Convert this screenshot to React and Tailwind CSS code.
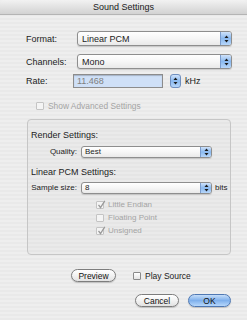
import React from "react";

const Arrows = ({ className = "" }) => (
  <svg width="5" height="8" viewBox="0 0 5 8" className={className}>
    <path d="M2.5 0.5 L4.5 3 L0.5 3 Z" fill="#1a1a1a" />
    <path d="M2.5 7.5 L4.5 5 L0.5 5 Z" fill="#1a1a1a" />
  </svg>
);

const Popup = ({ value, width, small = false }) => (
  <div
    className={`flex items-stretch ${small ? "h-[12px] text-[8px]" : "h-[15px] text-[9px]"} rounded-[3px] border border-[#8e8e8e] bg-gradient-to-b from-[#ffffff] via-[#f6f6f6] to-[#e9e9e9] shadow-[0_1px_1px_rgba(0,0,0,0.15)]`}
    style={{ width }}
  >
    <div className={`flex-1 flex items-center ${small ? "pl-[3px]" : "pl-[4px]"}`}>{value}</div>
    <div className="w-[11px] flex items-center justify-center rounded-r-[2px] border-l border-[#7b9ccc] bg-gradient-to-b from-[#cfe2fa] via-[#8ab9ef] to-[#b6d6fa]">
      <Arrows />
    </div>
  </div>
);

const Check = ({ checked, disabled, label }) => (
  <div className={`flex items-center gap-[4px] ${disabled ? "text-[#a4a4a4]" : ""}`}>
    <div
      className={`relative w-[8px] h-[8px] rounded-[1px] border ${disabled ? "border-[#c4c4c4] bg-[#f4f4f4]" : "border-[#8a8a8a] bg-gradient-to-b from-white to-[#e4e4e4]"}`}
    >
      {checked && (
        <svg width="9" height="9" viewBox="0 0 9 9" className="absolute left-[0px] top-[-2px]">
          <path d="M1.5 4.8 L3.5 7.5 L7.8 0.8" fill="none" stroke="#9a9a9a" strokeWidth="1.3" />
        </svg>
      )}
    </div>
    <span>{label}</span>
  </div>
);

const Pill = ({ children, width, blue = false }) => (
  <div
    className={`h-[13px] flex items-center justify-center rounded-full border text-[8.5px] ${
      blue
        ? "border-[#4f78b3] bg-gradient-to-b from-[#c5ddf8] via-[#7fb0ec] to-[#b6d7fb] text-[#111]"
        : "border-[#7d7d7d] bg-gradient-to-b from-[#ffffff] via-[#f2f2f2] to-[#e2e2e2] text-[#111]"
    } shadow-[0_1px_1px_rgba(0,0,0,0.18)]`}
    style={{ width }}
  >
    {children}
  </div>
);

export default function App() {
  return (
    <div className="w-[247px] h-[320px] overflow-hidden flex flex-col font-['Liberation_Sans',Arial,sans-serif] text-[9px] leading-[10px] text-[#1c1c1c] bg-[repeating-linear-gradient(180deg,#eeeeee_0px,#eeeeee_2px,#e9e9e9_2px,#e9e9e9_4px)]">
      {/* Title bar */}
      <div className="h-[15px] shrink-0 flex items-center justify-center border-b border-[#b4b4b4] bg-gradient-to-b from-[#f2f2f2] to-[#d2d2d2] rounded-t-[4px] text-[9px] text-[#202020]">
        Sound Settings
      </div>

      <div className="flex flex-col pl-[26px] pr-[15px]">
        {/* Format */}
        <div className="mt-[16px] flex items-center">
          <span className="w-[51px]">Format:</span>
          <Popup value="Linear PCM" width={155} />
        </div>

        {/* Channels */}
        <div className="mt-[8px] flex items-center">
          <span className="w-[51px]">Channels:</span>
          <Popup value="Mono" width={155} />
        </div>

        {/* Rate */}
        <div className="mt-[5px] flex items-center">
          <span className="w-[47px]">Rate:</span>
          <div className="w-[90px] h-[14px] flex items-center pl-[3px] border border-[#8c8c8c] bg-[#cfe0f7] text-[#808080] shadow-[inset_0_1px_1px_rgba(0,0,0,0.2)]">
            11.468
          </div>
          <div className="ml-[7px] w-[11px] h-[14px] flex items-center justify-center rounded-[3px] border border-[#6f8fbf] bg-gradient-to-b from-[#cfe2fa] via-[#8ab9ef] to-[#b6d6fa]">
            <Arrows />
          </div>
          <span className="ml-[4px]">kHz</span>
        </div>

        {/* Show advanced */}
        <div className="mt-[13px] ml-[10px] text-[8.4px]">
          <Check disabled label="Show Advanced Settings" />
        </div>

        {/* Group box */}
        <div className="mt-[8px] ml-[1px] w-[204px] h-[136px] rounded-[4px] border border-[#c6c6c6] bg-black/[0.015] flex flex-col pl-[3px]">
          <div className="mt-[10px]">Render Settings:</div>
          <div className="mt-[6px] flex items-center text-[8px]">
            <span className="w-[46px] text-right">Quality:</span>
            <div className="ml-[4px]">
              <Popup value="Best" width={131} small />
            </div>
          </div>
          <div className="mt-[9px]">Linear PCM Settings:</div>
          <div className="mt-[5px] flex items-center text-[8px]">
            <span className="w-[46px] text-right">Sample size:</span>
            <div className="ml-[4px]">
              <Popup value="8" width={131} small />
            </div>
            <span className="ml-[3px]">bits</span>
          </div>
          <div className="mt-[4px] ml-[65px] flex flex-col text-[8px]">
            <div className="h-[13px] flex items-center">
              <Check checked disabled label="Little Endian" />
            </div>
            <div className="h-[13px] flex items-center">
              <Check disabled label="Floating Point" />
            </div>
            <div className="h-[13px] flex items-center">
              <Check checked disabled label="Unsigned" />
            </div>
          </div>
        </div>

        {/* Preview row */}
        <div className="mt-[14px] ml-[45px] flex items-center text-[8.5px]">
          <Pill width={45}>Preview</Pill>
          <div className="ml-[17px]">
            <Check label="Play Source" />
          </div>
        </div>

        {/* Buttons */}
        <div className="mt-[12px] flex justify-end gap-[9px] pr-[1px]">
          <Pill width={44}>Cancel</Pill>
          <Pill width={43} blue>OK</Pill>
        </div>
      </div>
    </div>
  );
}
